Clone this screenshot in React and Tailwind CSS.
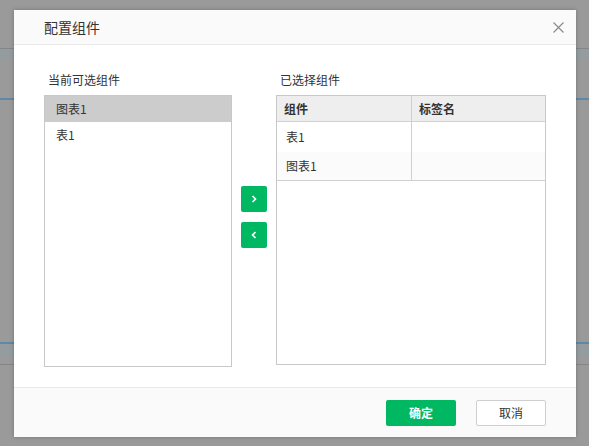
import React from 'react';

const font = { fontFamily: '"Noto Sans CJK SC", "Liberation Sans", sans-serif' };

export default function App() {
  return (
    <div className="relative w-[589px] h-[446px] overflow-hidden bg-[#9a9a9a]" style={font}>
      {/* page behind the mask */}
      <div className="absolute inset-x-0 top-[48px] h-px bg-[#858585]" />
      <div className="absolute inset-x-0 top-[49px] h-[10px] bg-[#949ca0]" />
      <div className="absolute inset-x-0 top-[98px] h-[2px] bg-[#5e88a6]" />
      <div className="absolute inset-x-0 top-[342px] h-[2px] bg-[#5e88a6]" />
      <div className="absolute inset-x-0 top-[344px] h-[14px] bg-[#949ca0]" />
      <div className="absolute inset-x-0 top-[364px] h-px bg-[#858585]" />

      {/* modal */}
      <div className="absolute left-[14px] top-[10px] w-[562px] h-[427px] bg-white flex flex-col shadow-[0_0_4px_rgba(0,0,0,0.25)]">
        <div className="h-[35px] flex items-center justify-between pl-[30px] pr-[12px] bg-[#fafafa] border-b border-[#eaeaea]">
          <span className="text-[14px] text-[#333]">配置组件</span>
          <svg width="11" height="11" viewBox="0 0 11 11" className="text-[#888]">
            <path d="M0.5 0.5L10.5 10.5M10.5 0.5L0.5 10.5" stroke="currentColor" strokeWidth="1.1" />
          </svg>
        </div>

        <div className="flex-1 flex px-[30px] pt-[27px] gap-[9px]">
          <div className="w-[188px] flex flex-col">
            <div className="h-[16px] pl-[4px] text-[12px] leading-[16px] text-[#333]">当前可选组件</div>
            <div className="mt-[7px] h-[272px] border border-[#c8c8c8] text-[12px] text-[#333]">
              <div className="h-[26px] pl-[11px] flex items-center bg-[#cccccc]">图表1</div>
              <div className="h-[26px] pl-[11px] flex items-center">表1</div>
            </div>
          </div>

          <div className="w-[26px] flex flex-col gap-[10px] pt-[114px]">
            <button className="w-[26px] h-[26px] rounded-[2px] bg-[#00b862] flex items-center justify-center">
              <svg width="8" height="8" viewBox="0 0 8 8">
                <path d="M2.5 1L5.5 4L2.5 7" stroke="white" strokeWidth="1.6" fill="none" />
              </svg>
            </button>
            <button className="w-[26px] h-[26px] rounded-[2px] bg-[#00b862] flex items-center justify-center">
              <svg width="8" height="8" viewBox="0 0 8 8">
                <path d="M5.5 1L2.5 4L5.5 7" stroke="white" strokeWidth="1.6" fill="none" />
              </svg>
            </button>
          </div>

          <div className="w-[270px] flex flex-col">
            <div className="h-[16px] pl-[4px] text-[12px] leading-[16px] text-[#333]">已选择组件</div>
            <div className="mt-[7px] h-[270px] border border-[#c8c8c8] text-[12px] text-[#333]">
              <div className="flex h-[26px] bg-[#eeeeee] border-b border-[#d0d0d0] font-bold">
                <div className="w-[135px] pl-[7px] flex items-center border-r border-[#d0d0d0]">组件</div>
                <div className="flex-1 pl-[7px] flex items-center">标签名</div>
              </div>
              <div className="flex h-[30px]">
                <div className="w-[135px] pl-[9px] flex items-center border-r border-[#d0d0d0]">表1</div>
                <div className="flex-1" />
              </div>
              <div className="flex h-[29px] bg-[#fbfbfb] border-b border-[#d0d0d0]">
                <div className="w-[135px] pl-[9px] flex items-center border-r border-[#d0d0d0]">图表1</div>
                <div className="flex-1" />
              </div>
            </div>
          </div>
        </div>

        <div className="h-[50px] bg-[#fafafa] border-t border-[#eaeaea] flex justify-end items-start pt-[12px] pr-[30px] gap-[20px]">
          <button className="w-[70px] h-[26px] rounded-[2px] bg-[#00b862] text-white text-[12px] font-bold">确定</button>
          <button className="w-[70px] h-[26px] rounded-[2px] bg-white border border-[#cfcfcf] text-[#333] text-[12px]">取消</button>
        </div>
      </div>
    </div>
  );
}
